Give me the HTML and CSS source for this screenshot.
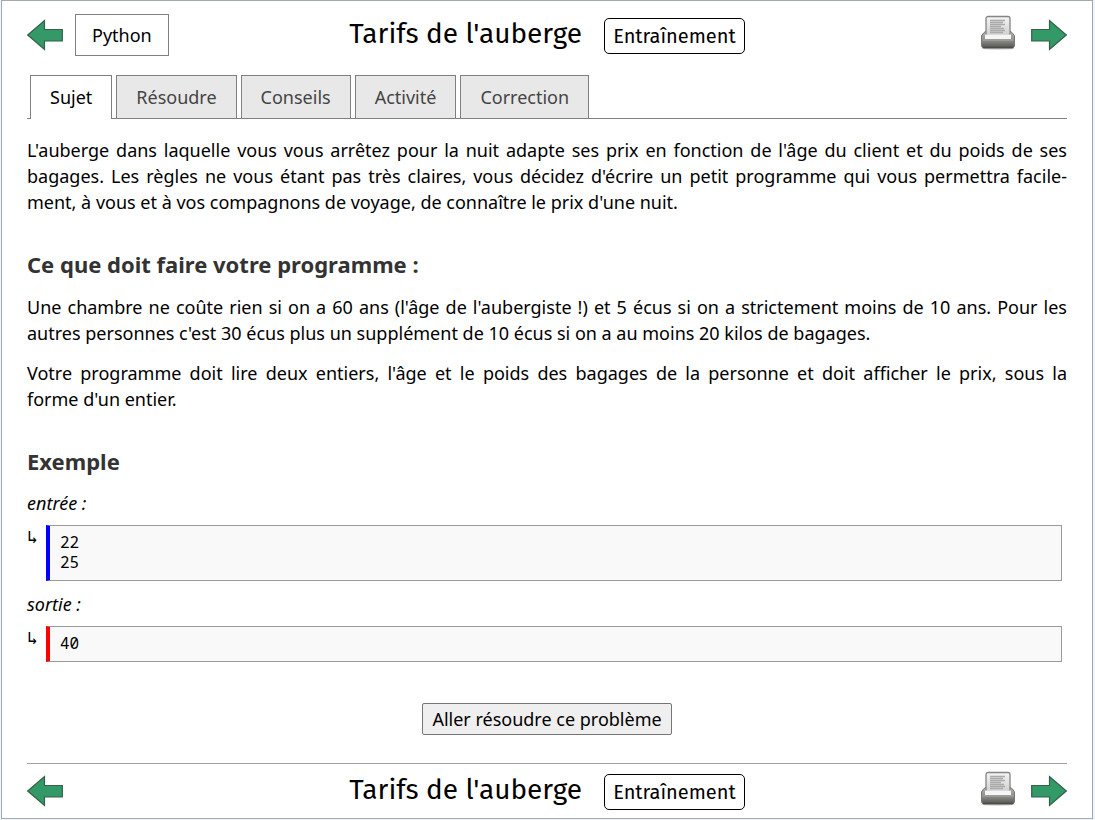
FILE: index.html
```
<!DOCTYPE html>
<html lang="fr">
<head>
<meta charset="utf-8">
<meta name="viewport" content="width=device-width, initial-scale=1">
<title>Tarifs de l'auberge</title>
<link rel="stylesheet" href="styles.css">
</head>
<body>
<svg class="sprite" aria-hidden="true">
  <defs>
    <linearGradient id="sheet" x1="0" y1="0" x2="0" y2="1"><stop offset="0" stop-color="#f4f4f4"/><stop offset="1" stop-color="#d0d0d0"/></linearGradient>
    <linearGradient id="body" x1="0" y1="0" x2="0" y2="1"><stop offset="0" stop-color="#b4b4b0"/><stop offset=".5" stop-color="#92928e"/><stop offset="1" stop-color="#555550"/></linearGradient>
  </defs>
  <symbol id="arrow" viewBox="0 0 36 32">
    <path d="M35.3 16 18.5 1.5V10.500H.7V22H18.500V30.500Z" fill="#339966" stroke="#35604a" stroke-width="1.200"/>
  </symbol>
  <symbol id="printer" viewBox="0 0 36 36">
    <ellipse cx="18" cy="33.500" rx="17" ry="1.500" fill="#ddd"/>
    <path d="M3.500 18 6 16H30L32.500 18 34.500 21V30Q34.500 33 32 33H4Q1.500 33 1.500 30V21Z" fill="url(#body)" stroke="#777773"/>
    <rect x="6" y="1.500" width="24" height="19" rx="2" fill="url(#sheet)" stroke="#858585" stroke-width="1.300"/>
    <path d="M10 5.500h15M10 7.500h13M10 9.500h15M10 11.500h11M10 13.500h14M10 15.500h15M10 17.500h13" stroke="#aaa" stroke-width="1.400"/>
    <path d="M5 19.500H31V24H5Z" fill="#f5f5f5"/>
    <path d="M2.500 25H33.500" stroke="#a8a8a4"/>
    <path d="M3 32.500H33" stroke="#4c4c48" stroke-width="1.500"/>
  </symbol>
</svg>
<main class="panel">
  <header class="bar bar-top">
    <div class="bar-side">
      <a class="icon-link" href="#precedent" aria-label="Précédent"><svg class="arrow arrow-back"><use href="#arrow"/></svg></a>
      <button class="language" type="button">Python</button>
    </div>
    <div class="heading"><h1 class="title">Tarifs de l'auberge</h1><span class="badge">Entraînement</span></div>
    <div class="bar-side bar-end">
      <a class="icon-link" href="#imprimer" aria-label="Imprimer"><svg class="printer"><use href="#printer"/></svg></a>
      <a class="icon-link" href="#suivant" aria-label="Suivant"><svg class="arrow"><use href="#arrow"/></svg></a>
    </div>
  </header>
  <nav class="tabs">
    <a class="tab tab-active" href="#sujet" aria-current="page">Sujet</a>
    <a class="tab" href="#resoudre">Résoudre</a>
    <a class="tab" href="#conseils">Conseils</a>
    <a class="tab" href="#activite">Activité</a>
    <a class="tab" href="#correction">Correction</a>
  </nav>
  <section class="content" id="sujet">
    <p class="text">L'auberge dans laquelle vous vous arrêtez pour la nuit adapte ses prix en fonction de l'âge du client et du poids de ses bagages. Les règles ne vous étant pas très claires, vous décidez d'écrire un petit programme qui vous permettra facile&shy;ment, à vous et à vos compagnons de voyage, de connaître le prix d'une nuit.</p>
    <h2 class="subtitle">Ce que doit faire votre programme :</h2>
    <p class="text">Une chambre ne coûte rien si on a 60 ans (l'âge de l'aubergiste !) et 5 écus si on a strictement moins de 10 ans. Pour les autres personnes c'est 30 écus plus un supplément de 10 écus si on a au moins 20 kilos de bagages.</p>
    <p class="text">Votre programme doit lire deux entiers, l'âge et le poids des bagages de la personne et doit afficher le prix, sous la forme&nbsp;d'un entier.</p>
    <h2 class="subtitle">Exemple</h2>
    <p class="label">entrée :</p>
    <div class="sample"><span class="hook">↳</span><pre class="code code-in">22
25</pre></div>
    <p class="label">sortie :</p>
    <div class="sample"><span class="hook">↳</span><pre class="code code-out">40</pre></div>
    <div class="action"><button class="solve" type="button">Aller résoudre ce problème</button></div>
  </section>
  <footer class="bar bar-bottom">
    <div class="bar-side">
      <a class="icon-link" href="#precedent" aria-label="Précédent"><svg class="arrow arrow-back"><use href="#arrow"/></svg></a>
    </div>
    <div class="heading"><div class="title">Tarifs de l'auberge</div><span class="badge">Entraînement</span></div>
    <div class="bar-side bar-end">
      <a class="icon-link" href="#imprimer" aria-label="Imprimer"><svg class="printer"><use href="#printer"/></svg></a>
      <a class="icon-link" href="#suivant" aria-label="Suivant"><svg class="arrow"><use href="#arrow"/></svg></a>
    </div>
  </footer>
</main>
</body>
</html>
```
FILE: styles.css
```
* { box-sizing: border-box; }
body {
  margin: 0;
  background: #f0f4fb;
  color: #000;
  font: 18px/26px "Noto Sans", sans-serif;
}
.sprite { position: absolute; width: 0; height: 0; }
.panel {
  margin: 0 2px 1px 1px;
  padding: 0 25px;
  background: #fff;
  border: 1px solid #a2a9b1;
}
.bar {
  display: grid;
  grid-template-columns: 1fr auto 1fr;
  align-items: center;
}
.bar-top { padding: 13px 0 19px; }
.bar-bottom { border-top: 1px solid #a2a2a2; padding: 7px 0; }
.bar-side { display: flex; align-items: center; gap: 12px; }
.bar-end { justify-content: flex-end; gap: 15px; }
.icon-link { display: block; }
.arrow, .printer { display: block; width: 36px; height: 32px; }
.printer { height: 36px; margin-bottom: 4px; }
.arrow-back { transform: scaleX(-1); }
.language {
  padding: 7px 16px;
  background: #fff;
  border: 1px solid gray;
  color: #000;
  font: inherit;
}
.heading { display: flex; align-items: center; gap: 22px; padding-top: 2px; }
.title {
  margin: 0;
  font: 28px/32px "Fira Sans", "Noto Sans", sans-serif;
  padding-bottom: 4px;
}
.badge {
  padding: 4px 8px;
  border: 1px solid #000;
  border-radius: 5px;
  font: 20px/26px "Fira Sans", "Noto Sans", sans-serif;
}
.tabs {
  display: flex;
  gap: 4px;
  padding-left: 3px;
  border-bottom: 1px solid gray;
}
.tab {
  padding: 8px 19px;
  background: #e8e8e8;
  border: 1px solid gray;
  border-bottom: 0;
  color: #444;
  text-decoration: none;
}
.tab-active { margin-bottom: -1px; background: #fff; color: #000; }
.content { padding-top: 18px; }
.text { margin: 0 0 14px; text-align: justify; }
.subtitle { margin: 35px 0 16px; font-size: 22px; line-height: 28px; color: #333; }
.label { margin: 0 0 10px; font-style: italic; line-height: 24px; }
.sample { display: flex; gap: 9px; margin: 0 5px 11px 0; }
.hook { width: 10px; font-family: "Noto Sans Mono", monospace; line-height: 22px; }
.code {
  flex: 1;
  margin: 0;
  padding: 6px 10px 8px;
  background: #f9f9f9;
  border: 1px solid #999;
  border-left: 4px solid blue;
  font: 16px/20px "Noto Sans Mono", "Noto Sans", monospace;
}
.code-out { border-left-color: red; }
.action { display: flex; justify-content: center; padding: 30px 0 28px; }
.solve {
  padding: 2px 9px;
  background: #efefef;
  border: 1px solid #767676;
  border-radius: 2px;
  color: #000;
  font: inherit;
}
```
